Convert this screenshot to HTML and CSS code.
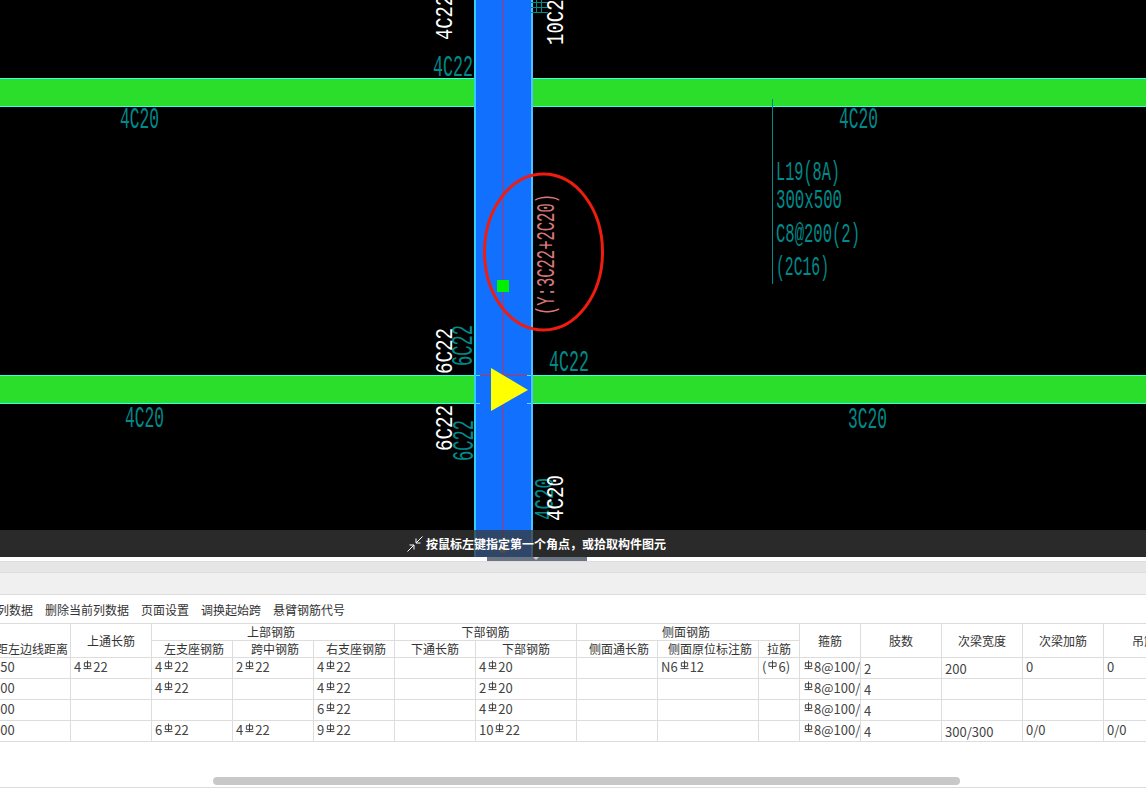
FILE: index.html
```html
<!DOCTYPE html>
<html lang="zh-CN">
<head>
    <meta charset="UTF-8">
    <meta name="viewport" content="width=device-width, initial-scale=1.0">
    <title>平法表格</title>
    <link rel="stylesheet" href="styles.css">
</head>
<body>

    <svg class="defs" width="0" height="0">
        <symbol id="bar3" viewBox="0 0 10 11">
            <path d="M5 .5V9.5M1.5 3H8.5V7H1.5ZM.5 9.5H9.5" fill="none" stroke="currentColor" stroke-width="1"/>
        </symbol>
        <symbol id="bar1" viewBox="0 0 10 11">
            <path d="M5 .5V10M1 3H9V7H1Z" fill="none" stroke="currentColor" stroke-width="1"/>
        </symbol>
    </svg>

    <div class="canvas">
        <svg class="drawing" width="1146" height="557" viewBox="0 0 1146 557">
            <!-- beams -->
            <rect class="beam" x="-2" y="78.5" width="1150" height="28"/>
            <rect class="beam" x="-2" y="375.5" width="1150" height="28"/>

            <!-- column -->
            <rect x="474" y="0" width="59" height="557" fill="#1270fe"/>
            <path d="M475 0V557" stroke="#33ccff" stroke-width="2"/>
            <path d="M532 0V557" stroke="#66ddff" stroke-width="1.5"/>
            <path d="M503 0V557" stroke="#b8336a" stroke-width="1"/>
            <path d="M480 375.5H527" stroke="#c9304f" stroke-width="1"/>
            <path d="M476 375.5H480M527 375.5H531M476 403.5H480M527 403.5H531" stroke="#33eeff" stroke-width="1"/>
            <rect x="497" y="280" width="12" height="12" fill="#00f000"/>
            <polygon points="491,368 528,390 491,411" fill="#ffff00"/>
            <circle cx="503" cy="549" r="11" fill="none" stroke="#2f8f55" stroke-width="1"/>
            <circle cx="503" cy="549" r="4" fill="#8c8c8c"/>

            <!-- top right stub lines -->
            <path class="stroke-teal" d="M531 2.5H548M531 7.5H548M531 12.5H548M536.5 0V12M541.5 0V12"/>

            <!-- leader -->
            <path class="stroke-teal" d="M772.5 99V284"/>

            <!-- teal labels -->
            <text class="cad teal" x="433" y="76" font-size="29" textLength="40" lengthAdjust="spacingAndGlyphs">4C22</text>
            <text class="cad teal" x="120" y="128" font-size="29" textLength="39" lengthAdjust="spacingAndGlyphs">4C20</text>
            <text class="cad teal" x="839" y="128" font-size="29" textLength="39" lengthAdjust="spacingAndGlyphs">4C20</text>
            <text class="cad teal" x="125" y="427" font-size="29" textLength="39" lengthAdjust="spacingAndGlyphs">4C20</text>
            <text class="cad teal" x="848" y="428" font-size="29" textLength="39" lengthAdjust="spacingAndGlyphs">3C20</text>
            <text class="cad teal" x="549" y="371" font-size="29" textLength="40" lengthAdjust="spacingAndGlyphs">4C22</text>
            <text class="cad teal" x="776" y="180" font-size="28" textLength="64" lengthAdjust="spacingAndGlyphs">L19(8A)</text>
            <text class="cad teal" x="776" y="208" font-size="28" textLength="66" lengthAdjust="spacingAndGlyphs">300x500</text>
            <text class="cad teal" x="776" y="242" font-size="28" textLength="84" lengthAdjust="spacingAndGlyphs">C8@200(2)</text>
            <text class="cad teal" x="776" y="275" font-size="28" textLength="53" lengthAdjust="spacingAndGlyphs">(2C16)</text>
            <text class="cad teal" transform="translate(472 366) rotate(-90)" font-size="29" textLength="41" lengthAdjust="spacingAndGlyphs">6C22</text>
            <text class="cad teal" transform="translate(473 461) rotate(-90)" font-size="29" textLength="41" lengthAdjust="spacingAndGlyphs">6C22</text>
            <text class="cad teal" transform="translate(553 520) rotate(-90)" font-size="28" textLength="42" lengthAdjust="spacingAndGlyphs">4C20</text>

            <!-- white labels -->
            <text class="cad white" transform="translate(452 40) rotate(-90)" font-size="24" textLength="45" lengthAdjust="spacingAndGlyphs">4C22</text>
            <text class="cad white" transform="translate(563 45) rotate(-90)" font-size="24" textLength="57" lengthAdjust="spacingAndGlyphs">10C22</text>
            <text class="cad white" transform="translate(452 374) rotate(-90)" font-size="24" textLength="46" lengthAdjust="spacingAndGlyphs">6C22</text>
            <text class="cad white" transform="translate(452 451) rotate(-90)" font-size="24" textLength="46" lengthAdjust="spacingAndGlyphs">6C22</text>
            <text class="cad white" transform="translate(563 521) rotate(-90)" font-size="24" textLength="46" lengthAdjust="spacingAndGlyphs">4C20</text>

            <!-- marked note -->
            <text class="cad pink" transform="translate(554 315) rotate(-90)" font-size="26" textLength="121" lengthAdjust="spacingAndGlyphs">(Y:3C22+2C20)</text>
            <ellipse cx="543.5" cy="252" rx="59" ry="78" fill="none" stroke="#f01c10" stroke-width="3"/>
        </svg>

        <div class="hint">
            <svg class="hint-icon" width="16" height="16" viewBox="0 0 16 16">
                <path d="M15.5 .5L9 7M9 2.5V7H13.5M.5 15.5L7 9M2.5 9H7V13.5" fill="none" stroke="#fff" stroke-width="1"/>
            </svg>
            <span>按鼠标左键指定第一个角点，或拾取构件图元</span>
        </div>
    </div>

    <div class="splitter"><div class="handle"></div></div>
    <div class="band"></div>
    <div class="tabs"></div>

    <div class="toolbar">
        <span class="tool tool-cut">列数据</span>
        <span class="tool">删除当前列数据</span>
        <span class="tool">页面设置</span>
        <span class="tool">调换起始跨</span>
        <span class="tool">悬臂钢筋代号</span>
    </div>

    <div class="grid-wrap">
        <table class="grid">
            <colgroup>
                <col class="c81"><col class="c81"><col class="c81"><col class="c81"><col class="c81">
                <col class="c81"><col class="c101"><col class="c81"><col class="c101"><col class="c41">
                <col class="c61"><col class="c81"><col class="c81"><col class="c81"><col class="c81">
            </colgroup>
            <thead>
                <tr>
                    <th rowspan="2" class="bottom">距左边线距离</th>
                    <th rowspan="2">上通长筋</th>
                    <th colspan="3" class="nudge-left">上部钢筋</th>
                    <th colspan="2">下部钢筋</th>
                    <th colspan="3" class="nudge-left">侧面钢筋</th>
                    <th rowspan="2">箍筋</th>
                    <th rowspan="2">肢数</th>
                    <th rowspan="2">次梁宽度</th>
                    <th rowspan="2">次梁加筋</th>
                    <th rowspan="2">吊筋</th>
                </tr>
                <tr>
                    <th class="nudge-right">左支座钢筋</th>
                    <th class="nudge-right">跨中钢筋</th>
                    <th class="nudge-right">右支座钢筋</th>
                    <th>下通长筋</th>
                    <th>下部钢筋</th>
                    <th class="nudge-right">侧面通长筋</th>
                    <th class="nudge-right">侧面原位标注筋</th>
                    <th>拉筋</th>
                </tr>
            </thead>
            <tbody>
                <tr>
                    <td>150</td>
                    <td>4<svg class="bar"><use href="#bar3"/></svg>22</td>
                    <td>4<svg class="bar"><use href="#bar3"/></svg>22</td>
                    <td>2<svg class="bar"><use href="#bar3"/></svg>22</td>
                    <td>4<svg class="bar"><use href="#bar3"/></svg>22</td>
                    <td></td>
                    <td>4<svg class="bar"><use href="#bar3"/></svg>20</td>
                    <td></td>
                    <td>N6<svg class="bar"><use href="#bar3"/></svg>12</td>
                    <td>(<svg class="bar"><use href="#bar1"/></svg>6)</td>
                    <td><svg class="bar bar-first"><use href="#bar3"/></svg>8@100/200(2)</td>
                    <td class="low">2</td>
                    <td class="low">200</td>
                    <td>0</td>
                    <td>0</td>
                </tr>
                <tr>
                    <td>200</td>
                    <td></td>
                    <td>4<svg class="bar"><use href="#bar3"/></svg>22</td>
                    <td></td>
                    <td>4<svg class="bar"><use href="#bar3"/></svg>22</td>
                    <td></td>
                    <td>2<svg class="bar"><use href="#bar3"/></svg>20</td>
                    <td></td>
                    <td></td>
                    <td></td>
                    <td><svg class="bar bar-first"><use href="#bar3"/></svg>8@100/200(4)</td>
                    <td class="low">4</td>
                    <td></td>
                    <td></td>
                    <td></td>
                </tr>
                <tr>
                    <td>300</td>
                    <td></td>
                    <td></td>
                    <td></td>
                    <td>6<svg class="bar"><use href="#bar3"/></svg>22</td>
                    <td></td>
                    <td>4<svg class="bar"><use href="#bar3"/></svg>20</td>
                    <td></td>
                    <td></td>
                    <td></td>
                    <td><svg class="bar bar-first"><use href="#bar3"/></svg>8@100/200(4)</td>
                    <td class="low">4</td>
                    <td></td>
                    <td></td>
                    <td></td>
                </tr>
                <tr>
                    <td>300</td>
                    <td></td>
                    <td>6<svg class="bar"><use href="#bar3"/></svg>22</td>
                    <td>4<svg class="bar"><use href="#bar3"/></svg>22</td>
                    <td>9<svg class="bar"><use href="#bar3"/></svg>22</td>
                    <td></td>
                    <td>10<svg class="bar"><use href="#bar3"/></svg>22</td>
                    <td></td>
                    <td></td>
                    <td></td>
                    <td><svg class="bar bar-first"><use href="#bar3"/></svg>8@100/200(4)</td>
                    <td class="low">4</td>
                    <td class="low">300/300</td>
                    <td>0/0</td>
                    <td>0/0</td>
                </tr>
            </tbody>
        </table>
    </div>

    <div class="scroll">
        <div class="thumb"></div>
    </div>

</body>
</html>
```

FILE: styles.css
```css
html, body {
    margin: 0;
    padding: 0;
}
body {
    width: 1146px;
    height: 790px;
    overflow: hidden;
    background: #fff;
    font-family: "Noto Sans CJK SC", "Liberation Sans", sans-serif;
    font-size: 12px;
    color: #333;
}
.defs {
    position: absolute;
}
.canvas {
    position: relative;
    height: 557px;
    background: #000;
    overflow: hidden;
}
.drawing {
    display: block;
}
.beam {
    fill: #2bde2b;
    stroke: #33ffee;
    stroke-width: 1;
}
.stroke-teal {
    fill: none;
    stroke: #008b8b;
    stroke-width: 1;
}
.cad {
    font-family: "Liberation Mono", monospace;
}
.teal {
    fill: #008a8a;
}
.white {
    fill: #fff;
}
.pink {
    fill: #d87878;
}
.hint {
    position: absolute;
    left: 0;
    right: 0;
    bottom: 0;
    height: 27px;
    padding-left: 407px;
    display: flex;
    align-items: center;
    gap: 3px;
    background: rgba(56, 56, 56, 0.75);
    color: #fff;
    font-weight: 700;
}
.hint-icon {
    flex: none;
}
.splitter {
    height: 4px;
    padding-left: 487px;
    background: #fff;
    border-bottom: 1px solid #ddd;
}
.handle {
    position: relative;
    width: 100px;
    height: 4px;
    background: #6b7583;
}
.handle::after {
    content: "";
    position: absolute;
    left: 46px;
    top: 0;
    border: 3px solid transparent;
    border-top-color: #c8ccd2;
    border-bottom: 0;
}
.band {
    height: 10px;
    background: #e6e6e6;
    border-bottom: 1px solid #ddd;
}
.tabs {
    height: 21px;
    background: #f0f0f0;
    border-bottom: 1px solid #ddd;
}
.toolbar {
    height: 28px;
    display: flex;
    align-items: center;
    gap: 12px;
    margin-left: -3px;
    padding-top: 1px;
    box-sizing: border-box;
    line-height: 1;
}
.grid-wrap {
    height: 153px;
    overflow: hidden;
}
.grid {
    table-layout: fixed;
    width: 1195px;
    margin-left: -11px;
    border-collapse: collapse;
}
.c41 { width: 41px; }
.c61 { width: 61px; }
.c81 { width: 81px; }
.c101 { width: 101px; }
.grid th, .grid td {
    border: 1px solid #ddd;
    padding: 0 3px;
    overflow: hidden;
    white-space: nowrap;
    box-sizing: border-box;
}
.grid th {
    height: 17px;
    font-weight: 400;
    line-height: 16px;
    text-align: center;
    color: #333;
}
.grid th.bottom {
    vertical-align: bottom;
    padding: 0 0 0 4px;
}
.grid th.nudge-right {
    padding-left: 7px;
}
.grid th.nudge-left {
    padding-right: 7px;
}
.grid td {
    height: 21px;
    font-size: 13px;
    line-height: 18px;
    color: #444;
    vertical-align: top;
}
.grid td.low {
    padding-top: 2px;
}
.bar {
    width: 9px;
    height: 10px;
    margin: 0 1px 0 2px;
    vertical-align: 2px;
    color: #333;
}
.bar-first {
    margin-left: 1px;
}
.scroll {
    height: 12px;
    box-sizing: border-box;
    padding: 1px 0 0 213px;
    border-bottom: 1px solid #ddd;
}
.thumb {
    width: 747px;
    height: 8px;
    border-radius: 4px;
    background: #c8c8c8;
}
```
